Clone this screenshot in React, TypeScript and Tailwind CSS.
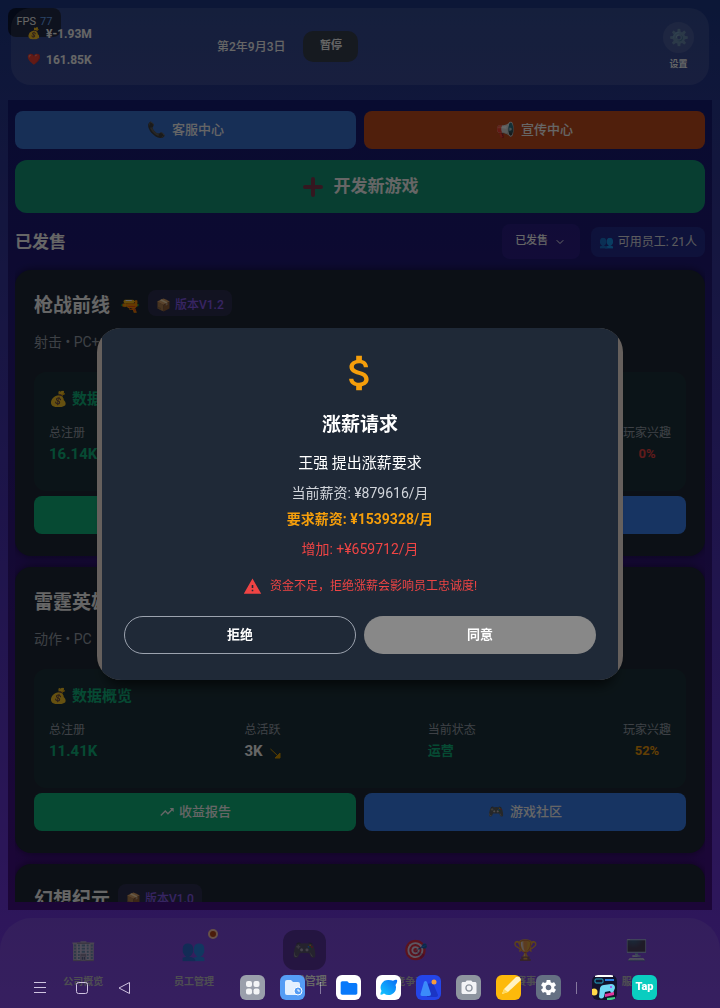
import type { ReactNode } from "react";
import { LuChevronDown } from "react-icons/lu";
import {
  MdAttachMoney,
  MdFolder,
  MdPhotoCamera,
  MdSettings,
  MdTrendingUp,
  MdWarning,
} from "react-icons/md";

const games = [
  {
    title: "枪战前线",
    icon: "🔫",
    version: "版本V1.2",
    info: "射击 • PC+主机",
    registered: "16.14K",
    active: "5K",
    status: "运营",
    interest: "0%",
    interestColor: "text-[#ef4444]",
  },
  {
    title: "雷霆英雄",
    icon: "",
    version: "版本V1.0",
    info: "动作 • PC",
    registered: "11.41K",
    active: "3K",
    status: "运营",
    interest: "52%",
    interestColor: "text-[#f59e0b]",
  },
  {
    title: "幻想纪元",
    icon: "",
    version: "版本V1.0",
    info: "角色扮演 • PC",
    registered: "9.86K",
    active: "2K",
    status: "运营",
    interest: "48%",
    interestColor: "text-[#f59e0b]",
  },
];

const tabs = [
  { icon: "🏢", label: "公司概览" },
  { icon: "👥", label: "员工管理", badge: true },
  { icon: "🎮", label: "游戏管理", active: true },
  { icon: "🎯", label: "竞争对手" },
  { icon: "🏆", label: "赛事" },
  { icon: "🖥️", label: "服务器" },
];

function Header() {
  return (
    <header className="relative px-[11px] pt-2 pb-[15px]">
      <div className="absolute left-2 top-2 flex h-[29px] w-[53px] justify-center gap-1 rounded-lg bg-black/60 pt-[6px] text-[11px] leading-4 text-white">
        FPS <span className="text-[#5ba0ff]">77</span>
      </div>
      <div className="relative flex h-[77px] items-center rounded-[20px] bg-white/10 pr-[15px] pl-4 text-white">
        <div className="flex w-[190px] flex-col gap-[10px] text-xs leading-4 font-bold">
          <div className="flex items-center gap-[6px]">
            <span className="w-[13px] text-[11px]">💰</span>¥-1.93M
          </div>
          <div className="flex items-center gap-[6px]">
            <span className="w-[13px] text-[11px]">❤️</span>161.85K
          </div>
        </div>
        <span className="text-xs font-medium">第2年9月3日</span>
        <button className="ml-[18px] h-[31px] w-[55px] rounded-[10px] bg-[#374151] text-[11px] font-bold">
          暂停
        </button>
        <button className="ml-auto flex flex-col items-center gap-1 text-[9px] leading-[14px] font-bold">
          <span className="flex size-[31px] items-center justify-center rounded-full bg-white/10 text-base">
            <span className="opacity-60">⚙️</span>
          </span>
          设置
        </button>
      </div>
    </header>
  );
}

function VersionChip({ children }: { children: ReactNode }) {
  return (
    <span className="flex h-[26px] items-center gap-1 rounded-lg bg-[#8b5cf6]/15 px-2 pt-1 text-xs font-medium text-[#8b5cf6]">
      <span className="text-xs">📦</span>
      {children}
    </span>
  );
}

function GameCard({ game }: { game: (typeof games)[number] }) {
  return (
    <article className="shrink-0 rounded-2xl bg-[#1f2937] px-[19px] pt-5 pb-[22px] shadow-[0_0_8px_rgba(0,0,0,0.5)]">
      <div className="flex h-8 items-start">
        <h3 className="text-[19px] leading-8 font-bold text-white">
          {game.title}
        </h3>
        {game.icon && <span className="ml-[10px] leading-8">{game.icon}</span>}
        <div className="ml-2">
          <VersionChip>{game.version}</VersionChip>
        </div>
      </div>
      <p className="mt-[10px] text-sm leading-5 text-[#9ca3af]">{game.info}</p>

      <div className="mt-5 rounded-xl bg-[#10b981]/8 px-[15px] pt-[15px] pb-[25px]">
        <h4 className="flex items-center gap-1 text-[15px] leading-6 font-bold text-[#10b981]">
          <span className="text-[15px]">💰</span>数据概览
        </h4>
        <dl className="mt-[14px] flex justify-between">
          <div>
            <dt className="text-xs leading-4 text-[#9ca3af]">总注册</dt>
            <dd className="mt-px text-[15px] leading-6 font-bold text-[#10b981]">
              {game.registered}
            </dd>
          </div>
          <div>
            <dt className="text-xs leading-4 text-[#9ca3af]">总活跃</dt>
            <dd className="mt-px flex items-center gap-[6px] text-[15px] leading-6 font-bold text-white">
              {game.active}
              <svg viewBox="0 0 12 12" className="mt-1 size-3 text-[#d99a00]">
                <path
                  d="M1.500 2L9 9M11 6v5H6z"
                  fill="currentColor"
                  stroke="currentColor"
                  strokeWidth="1"
                />
              </svg>
            </dd>
          </div>
          <div>
            <dt className="text-xs leading-4 text-[#9ca3af]">当前状态</dt>
            <dd className="mt-px text-[13px] leading-6 font-bold text-[#10b981]">
              {game.status}
            </dd>
          </div>
          <div className="text-center">
            <dt className="text-xs leading-4 text-[#9ca3af]">玩家兴趣</dt>
            <dd
              className={`mt-px text-[13px] leading-6 font-bold ${game.interestColor}`}
            >
              {game.interest}
            </dd>
          </div>
        </dl>
      </div>

      <div className="mt-[5px] grid grid-cols-2 gap-2 text-[13px] font-medium text-white">
        <button className="flex h-[38px] items-center justify-center gap-1 rounded-lg bg-[#10b981]">
          <MdTrendingUp className="size-4" />
          收益报告
        </button>
        <button className="flex h-[38px] items-center justify-center gap-[6px] rounded-lg bg-[#3b82f6]">
          <span>🎮</span>游戏社区
        </button>
      </div>
    </article>
  );
}

function TabBar() {
  return (
    <nav className="mt-2 grid h-[90px] grid-cols-6 rounded-t-[32px] bg-white/10 px-7 pt-3">
      {tabs.map((tab) => (
        <a
          key={tab.label}
          href="#"
          className={`flex flex-col items-center gap-1 leading-4 font-bold ${
            tab.active ? "text-[11px] text-white" : "text-[10px] text-[#c4c4cc]"
          }`}
        >
          <span
            className={`relative flex h-10 w-[43px] items-center justify-center rounded-xl text-xl ${
              tab.active ? "bg-black/30" : ""
            }`}
          >
            <span className="opacity-80">{tab.icon}</span>
            {tab.badge && (
              <span className="absolute -top-px -right-[3px] size-[10px] rounded-full border-2 border-[#ffc9b0] bg-[#b8481c]" />
            )}
          </span>
          {tab.label}
        </a>
      ))}
    </nav>
  );
}

function RaiseRequestDialog() {
  return (
    <div className="fixed inset-0 flex items-center justify-center bg-black/60 px-6">
      <div
        role="dialog"
        aria-labelledby="raise-title"
        className="w-full max-w-[526px] overflow-hidden rounded-3xl bg-[#66605d] px-[5px] shadow-[0_14px_12px_-8px_rgba(0,0,0,0.6)]"
      >
        <div className="flex flex-col items-center bg-[#1f2937] px-[22px] pt-[22px] pb-[26px] text-sm leading-5">
          <MdAttachMoney className="size-[46px] text-[#f59e0b]" />
          <h2
            id="raise-title"
            className="mt-[17px] text-[19px] leading-6 font-bold text-white"
          >
            涨薪请求
          </h2>
          <p className="mt-[14px] text-[15px] leading-6 text-white">
            王强 提出涨薪要求
          </p>
          <p className="mt-2 text-[#d1d5db]">当前薪资: ¥879616/月</p>
          <p className="mt-[6px] font-bold text-[#f59e0b]">
            要求薪资: ¥1539328/月
          </p>
          <p className="mt-[10px] text-[#ef4444]">增加: +¥659712/月</p>
          <p className="mt-[17px] flex items-center gap-2 text-xs leading-5 text-[#ef4444]">
            <MdWarning className="size-[19px]" />
            资金不足，拒绝涨薪会影响员工忠诚度!
          </p>
          <div className="mt-5 grid w-full grid-cols-2 gap-2 text-[13px] font-bold text-white">
            <button className="h-[38px] rounded-full border border-[#9ca3af]">
              拒绝
            </button>
            <button className="h-[38px] rounded-full bg-[#888888]">同意</button>
          </div>
        </div>
      </div>
    </div>
  );
}

function DockIcon({
  label,
  className,
  children,
}: {
  label: string;
  className: string;
  children: ReactNode;
}) {
  return (
    <button
      aria-label={label}
      className={`flex size-[25px] items-center justify-center overflow-hidden rounded-md ${className}`}
    >
      {children}
    </button>
  );
}

function SystemBar() {
  return (
    <div className="fixed inset-x-0 bottom-2 flex items-center justify-between pr-[63px] pl-[33px]">
      <div className="flex items-center gap-7 text-[#cfc3e0]">
        <button aria-label="菜单">
          <svg viewBox="0 0 14 14" className="size-[14px]">
            <path d="M1 1.500h12M1 6.500h12M1 11.500h12" stroke="currentColor" />
          </svg>
        </button>
        <button aria-label="主页">
          <svg viewBox="0 0 14 14" className="size-[14px]" fill="none">
            <rect x="1.500" y="1.500" width="11" height="11" rx="2" stroke="currentColor" />
          </svg>
        </button>
        <button aria-label="返回">
          <svg viewBox="0 0 14 14" className="size-[14px]" fill="none">
            <path d="M12.500 1.500v11L2 7z" stroke="currentColor" strokeLinejoin="round" />
          </svg>
        </button>
      </div>

      <div className="flex items-center gap-[15px]">
        <DockIcon label="应用" className="bg-[#9a9fab]">
          <svg viewBox="0 0 25 25" fill="#f3f4f6">
            <rect x="6" y="6" width="6" height="6" rx="2" />
            <rect x="13.500" y="6" width="6" height="6" rx="2" />
            <rect x="6" y="13.500" width="6" height="6" rx="2" />
            <rect x="13.500" y="13.500" width="6" height="6" rx="2" />
          </svg>
        </DockIcon>
        <DockIcon label="最近文件" className="bg-[#559df5]">
          <svg viewBox="0 0 25 25">
            <path d="M5 7q0-2 2-2h4l2 2h5q2 0 2 2v9q0 2-2 2H7q-2 0-2-2z" fill="#e3f0ff" />
            <circle cx="18" cy="16" r="4" fill="#559df5" stroke="#fff" />
            <path d="M18 14v2h2" stroke="#fff" fill="none" />
          </svg>
        </DockIcon>
        <span className="h-3 w-px bg-white/40" />
        <DockIcon label="文件管理" className="bg-white">
          <MdFolder className="size-5 text-[#0879fa]" />
        </DockIcon>
        <DockIcon label="浏览器" className="bg-white">
          <svg viewBox="0 0 25 25">
            <defs>
              <linearGradient id="planet" x1="0" y1="1" x2="1" y2="0">
                <stop offset="0" stopColor="#12c8ff" />
                <stop offset="1" stopColor="#0a6cf5" />
              </linearGradient>
            </defs>
            <path
              d="M12.500 5q3 0 4.500.800Q20 4 21 5q.800 1.500-1.500 5 .500 1.200.500 2.500a7.500 7.500 0 0 1-12 6Q5 20.500 4.500 19.500q-.500-1 1-3.500A7.500 7.500 0 0 1 12.500 5z"
              fill="url(#planet)"
            />
          </svg>
        </DockIcon>
        <DockIcon label="相册" className="bg-[#2445e8]">
          <svg viewBox="0 0 25 25">
            <path d="M10 9l7-1 5 12q0 2-2 2h-9z" fill="#1b35c4" />
            <path d="M8 7q1.500-2 3 0l4 12q0 2-2 2H6q-2 0-1.500-2z" fill="#3b8bfa" />
            <circle cx="18" cy="7" r="2.500" fill="#f79b3b" />
          </svg>
        </DockIcon>
        <DockIcon label="相机" className="bg-[#8e959f]">
          <MdPhotoCamera className="size-[18px] text-gray-100" />
        </DockIcon>
        <DockIcon label="便签" className="bg-[#fdb90b]">
          <svg viewBox="0 0 25 25">
            <path d="M6 19l2-5L20 2q3-1 5 1v2L12 17z" fill="#fff2c4" />
            <path d="M6 19l2-5 4 3z" fill="#ffd95c" />
          </svg>
        </DockIcon>
        <DockIcon label="设置" className="bg-[#657083]">
          <MdSettings className="size-[19px] text-white" />
        </DockIcon>
        <span className="h-3 w-px bg-white/40" />
        <DockIcon label="游戏" className="bg-[#12122c]">
          <svg viewBox="0 0 25 25">
            <path d="M3 0h18v2H3z" fill="#fff" />
            <rect x="3" y="4" width="8" height="4" rx="1" fill="none" stroke="#22a7c4" />
            <path d="M13 4h9v2h-9z" fill="#2b7de0" />
            <circle cx="2" cy="17" r="3.500" fill="#ffd84a" />
            <path d="M8 13q1-3 4-3l7-1q4 0 4 4l-2 5q-2 1-3-2l-5 1-1 5q-3 3-5 0z" fill="#6fd8f5" />
            <circle cx="19" cy="12" r="1" fill="#b03ae0" />
            <path d="M13 19l9-2v3l-9 2z" fill="#e0359b" />
            <path d="M15 23l8-1v3h-8z" fill="#3bd184" />
          </svg>
        </DockIcon>
        <DockIcon label="TapTap" className="bg-[#0acdc0] text-[11px] font-black text-white">
          Tap
        </DockIcon>
      </div>
    </div>
  );
}

export default function App() {
  return (
    <div className="flex h-screen flex-col overflow-hidden bg-linear-to-b from-[#1e3a8a] via-[#4a34b8] to-[#7c3aed] font-[Roboto,'Noto_Sans_CJK_SC',sans-serif]">
      <Header />

      <main className="mx-2 flex min-h-0 flex-1 flex-col bg-linear-to-b from-[#151c78] to-[#470f8c] px-[7px] pt-[11px] pb-2">
        <div className="flex min-h-0 flex-1 flex-col gap-[11px] overflow-hidden">
          <div className="grid shrink-0 grid-cols-2 gap-2 text-[13px] font-medium text-white">
            <button className="flex h-[38px] items-center justify-center gap-[6px] rounded-lg bg-[#3b75d8]">
              <span className="text-[15px]">📞</span>客服中心
            </button>
            <button className="flex h-[38px] items-center justify-center gap-[6px] rounded-lg bg-[#c84f20]">
              <span className="text-[15px]">📢</span>宣传中心
            </button>
          </div>

          <button className="flex h-[53px] shrink-0 items-center justify-center gap-[10px] rounded-xl bg-[#149c7c] text-[17px] font-bold text-white">
            <svg viewBox="0 0 22 22" className="size-[22px] text-[#833a52]">
              <path
                d="M11 3v16M3 11h16"
                stroke="currentColor"
                strokeWidth="4"
                strokeLinecap="round"
              />
            </svg>
            开发新游戏
          </button>

          <div className="flex h-[35px] shrink-0 items-center">
            <h2 className="pt-[2px] text-[17px] font-bold text-white">
              已发售
            </h2>
            <button className="ml-auto flex h-[35px] w-[78px] items-center justify-center gap-[6px] rounded-lg bg-[#7c3aed]/15 text-[11px] font-medium text-white">
              已发售
              <LuChevronDown className="size-3" />
            </button>
            <span className="ml-[11px] flex h-[30px] items-center gap-1 rounded-lg bg-[#3b82f6]/20 px-2 text-xs text-[#e5e7eb]">
              <span>👥</span>可用员工: 21人
            </span>
          </div>

          {games.map((game) => (
            <GameCard key={game.title} game={game} />
          ))}
        </div>
      </main>

      <TabBar />
      <RaiseRequestDialog />
      <SystemBar />
    </div>
  );
}
